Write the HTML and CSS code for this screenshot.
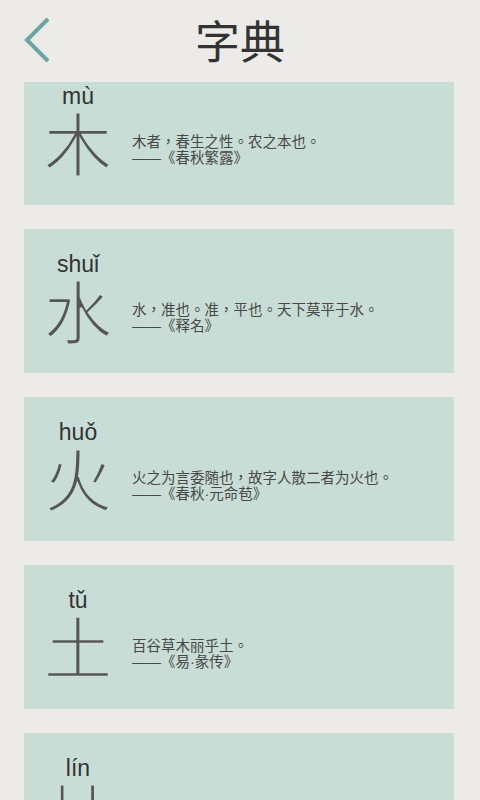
FILE: index.html
```html
<!DOCTYPE html>
<html lang="zh">
<head>
<meta charset="utf-8">
<title>字典</title>
<link rel="stylesheet" href="styles.css">
</head>
<body>
<header class="topbar">
  <div class="back">
    <svg width="30" height="46" viewBox="0 0 30 46"><polyline points="25,2 4,23 25,44" fill="none" stroke="#6aa6a6" stroke-width="4"/></svg>
  </div>
  <h1 class="title">字典</h1>
  <div></div>
</header>
<main class="viewport">
  <div class="list">
    <section class="card">
      <div class="glyph"><div class="pinyin">mù</div><div class="hanzi">木</div></div>
      <div class="quote" lang="zh-Hant"><p>木者，春生之性。农之本也。</p><p>——《春秋繁露》</p></div>
    </section>
    <section class="card">
      <div class="glyph"><div class="pinyin">shuǐ</div><div class="hanzi">水</div></div>
      <div class="quote" lang="zh-Hant"><p>水，准也。准，平也。天下莫平于水。</p><p>——《释名》</p></div>
    </section>
    <section class="card">
      <div class="glyph"><div class="pinyin">huǒ</div><div class="hanzi">火</div></div>
      <div class="quote" lang="zh-Hant"><p>火之为言委随也，故字人散二者为火也。</p><p>——《春秋·元命苞》</p></div>
    </section>
    <section class="card">
      <div class="glyph"><div class="pinyin">tǔ</div><div class="hanzi">土</div></div>
      <div class="quote" lang="zh-Hant"><p>百谷草木丽乎土。</p><p>——《易·彖传》</p></div>
    </section>
    <section class="card">
      <div class="glyph"><div class="pinyin">lín</div><div class="hanzi">林</div></div>
      <div class="quote" lang="zh-Hant"><p>平土有丛木曰林。</p><p>——《说文》</p></div>
    </section>
  </div>
</main>
</body>
</html>
```
FILE: styles.css
```css
html, body {
  margin: 0;
  padding: 0;
  background: #ecebe7;
  font-family: "Noto Sans CJK SC", "Liberation Sans", sans-serif;
}
.topbar {
  height: 82px;
  display: grid;
  grid-template-columns: 1fr auto 1fr;
  align-items: center;
}
.back {
  padding-left: 23px;
  display: flex;
  align-items: center;
  height: 82px;
  padding-bottom: 3px;
  box-sizing: border-box;
}
.title {
  margin: 0;
  font-size: 45px;
  font-weight: 400;
  color: #333;
  line-height: 1;
  padding-bottom: 4px;
}
.viewport {
  height: 718px;
  overflow: hidden;
}
.list {
  margin-top: -21px;
  display: flex;
  flex-direction: column;
  gap: 24px;
  padding: 0 26px 0 24px;
}
.card {
  height: 144px;
  background: #c8ddd5;
  display: flex;
  padding: 24px 0 0 22px;
  box-sizing: border-box;
  gap: 22px;
}
.glyph {
  width: 64px;
  display: flex;
  flex-direction: column;
  align-items: center;
}
.pinyin {
  font-family: "Liberation Sans", Arial, sans-serif;
  font-size: 23px;
  line-height: 23px;
  color: #333;
}
.hanzi {
  font-size: 69px;
  line-height: 68px;
  font-weight: 400;
  color: #555;
  margin-top: -1px;
  -webkit-text-stroke: 2.4px #c8ddd5;
}
.quote {
  padding-top: 49px;
  color: #484848;
  font-size: 14.5px;
  font-family: "Liberation Sans", "Noto Sans CJK TC", sans-serif;
}
.quote p {
  margin: 0;
  line-height: 16px;
}
```
